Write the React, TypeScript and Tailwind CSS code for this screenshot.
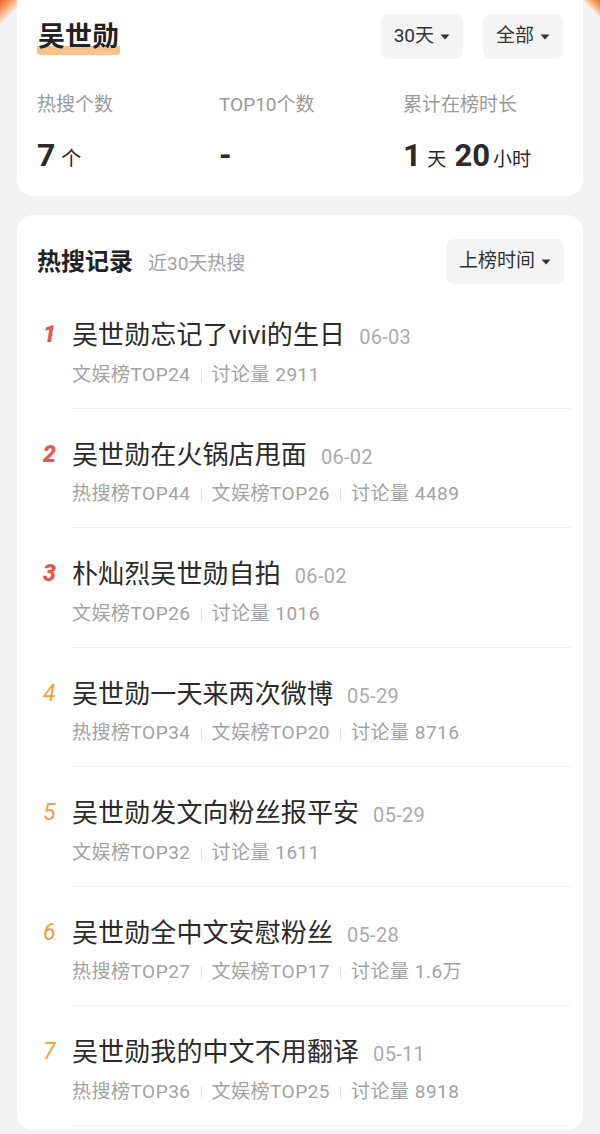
type Item = {
  rank: number;
  title: string;
  date: string;
  tags: string[];
};

const items: Item[] = [
  { rank: 1, title: "吴世勋忘记了vivi的生日", date: "06-03", tags: ["文娱榜TOP24", "讨论量 2911"] },
  { rank: 2, title: "吴世勋在火锅店甩面", date: "06-02", tags: ["热搜榜TOP44", "文娱榜TOP26", "讨论量 4489"] },
  { rank: 3, title: "朴灿烈吴世勋自拍", date: "06-02", tags: ["文娱榜TOP26", "讨论量 1016"] },
  { rank: 4, title: "吴世勋一天来两次微博", date: "05-29", tags: ["热搜榜TOP34", "文娱榜TOP20", "讨论量 8716"] },
  { rank: 5, title: "吴世勋发文向粉丝报平安", date: "05-29", tags: ["文娱榜TOP32", "讨论量 1611"] },
  { rank: 6, title: "吴世勋全中文安慰粉丝", date: "05-28", tags: ["热搜榜TOP27", "文娱榜TOP17", "讨论量 1.6万"] },
  { rank: 7, title: "吴世勋我的中文不用翻译", date: "05-11", tags: ["热搜榜TOP36", "文娱榜TOP25", "讨论量 8918"] },
];

function Caret() {
  return (
    <svg width="10" height="6" viewBox="0 0 10 6" className="ml-[6px]">
      <path d="M0.5 0.5h9L5 5.5z" fill="#333" />
    </svg>
  );
}

function DropButton({ label }: { label: string }) {
  return (
    <button
      type="button"
      className="flex h-[45px] items-center rounded-[8px] bg-[#f4f4f4] px-[13px] text-[19px] text-[#333]"
    >
      {label}
      <Caret />
    </button>
  );
}

function Stat({ label, children }: { label: string; children: React.ReactNode }) {
  return (
    <div>
      <div className="h-[24px] text-[19px] leading-[24px] text-[#9a9a9a]">{label}</div>
      <div className="mt-[14px] flex h-[34px] items-baseline text-[#2a2a2a]">{children}</div>
    </div>
  );
}

function Row({ item }: { item: Item }) {
  const top = item.rank <= 3;
  return (
    <div className="flex">
      <div
        className={`w-[35px] pl-[6px] pt-[30px] text-[23px] leading-[32px] italic ${
          top ? "font-black text-[#e4594b]" : "font-normal text-[#f0a044]"
        }`}
      >
        {item.rank}
      </div>
      <div className="flex-1 border-b border-[#eeeeee] pt-[30px] pb-[20.5px]">
        <div className="flex h-[32px] items-baseline">
          <span className="text-[26px] leading-[32px] tracking-[0.1px] text-[#2b2b2b]">{item.title}</span>
          <span className="ml-[14px] text-[20px] tracking-[0.3px] text-[#ababab]">{item.date}</span>
        </div>
        <div className="mt-[12px] flex h-[24px] items-center text-[19px] tracking-[0.5px] text-[#a3a3a3]">
          {item.tags.map((t, i) => (
            <div key={t} className="flex items-center">
              {i > 0 && <span className="mx-[10px] h-[13px] w-px bg-[#e2e2e2]" />}
              <span>{t}</span>
            </div>
          ))}
        </div>
      </div>
    </div>
  );
}

export default function App() {
  return (
    <div className="min-h-[1134px] bg-[#f3f3f3] bg-[linear-gradient(135deg,#ee6326_0px,#f6a36b_9px,transparent_18px),linear-gradient(225deg,#ee6a2c_0px,#f5a060_6px,transparent_13px)] px-[17px] pb-[4px] font-['Roboto','Noto_Sans_CJK_SC',sans-serif]">
      <div className="rounded-b-[16px] bg-white px-[20px] pt-[14px] pb-[31px]">
        <div className="flex items-center justify-between">
          <h1 className="inline-block rounded-[3px] bg-[linear-gradient(transparent_76%,#f8c28c_76%)] px-[1px] text-[27px] leading-[36px] font-bold text-[#222]">
            吴世勋
          </h1>
          <div className="flex gap-[20px]">
            <DropButton label="30天" />
            <DropButton label="全部" />
          </div>
        </div>

        <div className="mt-[34px] grid grid-cols-[182px_184px_1fr]">
          <Stat label="热搜个数">
            <span className="text-[32px] font-bold">7</span>
            <span className="ml-[6px] text-[20px]">个</span>
          </Stat>
          <Stat label="TOP10个数">
            <span className="text-[32px] font-bold">-</span>
          </Stat>
          <Stat label="累计在榜时长">
            <span className="text-[32px] font-bold">1</span>
            <span className="ml-[6px] mr-[8px] text-[19px]">天</span>
            <span className="text-[31px] font-bold">20</span>
            <span className="ml-[3px] text-[19px]">小时</span>
          </Stat>
        </div>
      </div>

      <div className="mt-[19px] rounded-[16px] bg-white pt-[24px] pb-[4px] pl-[20px] pr-[12px]">
        <div className="flex items-center justify-between pr-[7px]">
          <div className="flex items-baseline">
            <h2 className="text-[24px] font-bold text-[#222]">热搜记录</h2>
            <span className="ml-[15px] text-[19px] text-[#a3a3a3]">近30天热搜</span>
          </div>
          <DropButton label="上榜时间" />
        </div>
        <div className="mt-[5px]">
          {items.map((it) => (
            <Row key={it.rank} item={it} />
          ))}
        </div>
      </div>
    </div>
  );
}
